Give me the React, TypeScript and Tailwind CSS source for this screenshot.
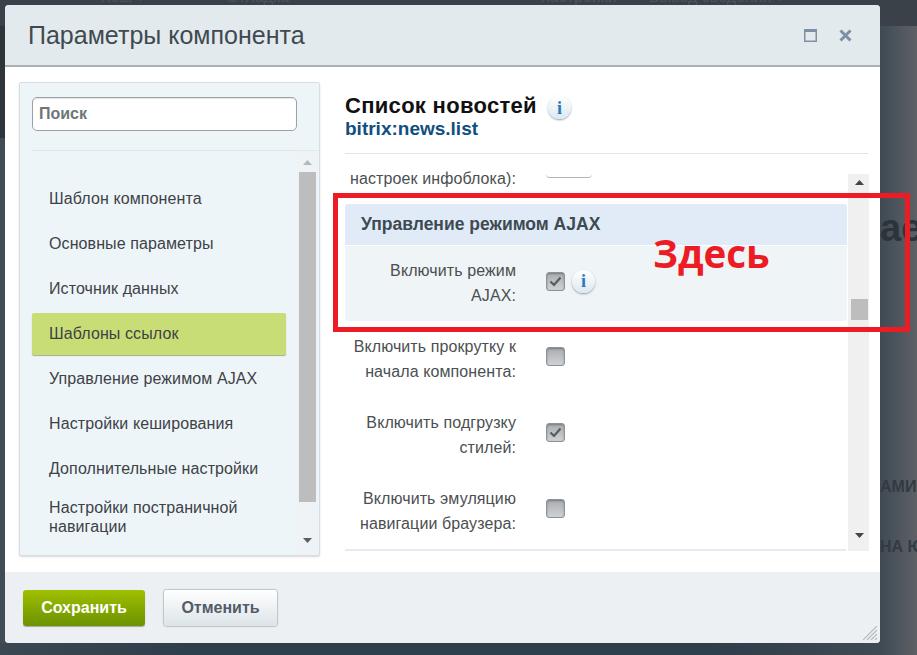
const sans = "font-['Liberation_Sans',Arial,sans-serif]";

const menu = [
  "Шаблон компонента",
  "Основные параметры",
  "Источник данных",
  "Шаблоны ссылок",
  "Управление режимом AJAX",
  "Настройки кеширования",
  "Дополнительные настройки",
];

function InfoIcon() {
  return (
    <span className="flex h-[23px] w-[23px] items-center justify-center rounded-full bg-gradient-to-b from-[#ffffff] to-[#dde8f0] shadow-[0_1px_2px_rgba(70,90,110,0.55)]">
      <span className="font-['Liberation_Serif',serif] text-[18px] leading-none font-bold text-[#2b78b8]">i</span>
    </span>
  );
}

function Checkbox({ checked }: { checked?: boolean }) {
  return (
    <span className="flex h-[19px] w-[19px] items-center justify-center rounded-[3px] border border-[#8d9297] bg-gradient-to-b from-[#a9adb1] to-[#cfd2d5] shadow-[inset_0_1px_2px_rgba(60,60,60,0.45)]">
      {checked && (
        <svg width="13" height="11" viewBox="0 0 13 11">
          <path d="M1.5 5.5 L5 9 L11.5 1.5" fill="none" stroke="#555b60" strokeWidth="2.2" />
        </svg>
      )}
    </span>
  );
}

function Arrow({ up, color }: { up?: boolean; color: string }) {
  return (
    <svg width="9" height="5" viewBox="0 0 9 5">
      <path d={up ? "M4.5 0 L9 5 L0 5 Z" : "M0 0 L9 0 L4.5 5 Z"} fill={color} />
    </svg>
  );
}

function ParamRow({ label, checked, info, className, boxClass }: { label: string[]; checked?: boolean; info?: boolean; className?: string; boxClass?: string }) {
  return (
    <div className={`flex items-center ${className ?? "h-[76px]"}`}>
      <div className="w-[171px] text-right text-[16px] leading-[25px] tracking-[0.1px] text-[#4b4f52]">
        {label.map((l) => (
          <div key={l}>{l}</div>
        ))}
      </div>
      <div className={`ml-[30px] flex items-center gap-[7px] ${boxClass ?? "mb-[6px]"}`}>
        <Checkbox checked={checked} />
        {info && <InfoIcon />}
      </div>
    </div>
  );
}

export default function App() {
  return (
    <div className={`relative h-[655px] w-[917px] overflow-hidden bg-[linear-gradient(90deg,#3b4852_0%,#2f3e4b_20%,#2f3e4b_78%,#3f4a53_96%,#5d6165_100%)] ${sans}`}>
      {/* page behind the dialog */}
      <div className="absolute inset-x-0 top-0 h-[26px] bg-[#3a4149]" />
      <div className="absolute top-[26px] left-0 h-[112px] w-[5px] bg-[#2e353b]" />
      <div className="absolute top-[138px] left-0 h-[505px] w-[5px] bg-[#414d55]" />
      <div className="absolute top-[26px] right-0 h-[617px] w-[37px] bg-[linear-gradient(90deg,#3f4a53,#5d6165)]" />
      <div className="absolute top-[-12px] left-[101px] text-[16px] leading-[18px] whitespace-nowrap text-[#4c545c]">Кеш ▾</div>
      <div className="absolute top-[-12px] left-[226px] text-[16px] leading-[18px] whitespace-nowrap text-[#4c545c]">Отладка</div>
      <div className="absolute top-[-12px] left-[541px] text-[16px] leading-[18px] whitespace-nowrap text-[#4c545c]">настройки</div>
      <div className="absolute top-[-12px] left-[649px] text-[16px] leading-[18px] whitespace-nowrap text-[#4c545c]">Вывод сведения ▾</div>
      <div className="absolute top-[205px] left-[880px] text-[38px] leading-[46px] font-bold whitespace-nowrap text-[#2c333b]">ае</div>
      <div className="absolute top-[478px] left-[880px] text-[16px] leading-[18px] font-bold whitespace-nowrap text-[#333a42]">АМИ</div>
      <div className="absolute top-[538px] left-[880px] text-[16px] leading-[18px] font-bold whitespace-nowrap text-[#333a42]">НА Ю</div>

      {/* dialog */}
      <div className="absolute top-[5px] left-[5px] flex h-[638px] w-[875px] flex-col overflow-hidden rounded-[4px] bg-white">
        <div className="flex h-[62px] shrink-0 items-center justify-between border-b-2 border-[#a9afb3] bg-[#e2eaee] pr-[28px] pl-[23px]">
          <span className="text-[25px] leading-none text-[#3f4a50]">Параметры компонента</span>
          <div className="flex items-center gap-[22px]">
            <svg width="13" height="13" viewBox="0 0 13 13">
              <path d="M0 0 H13 V13 H0 Z M1.5 3 V11.5 H11.5 V3 Z" fill="#7f8fa5" fillRule="evenodd" />
            </svg>
            <svg width="13" height="13" viewBox="0 0 13 13">
              <path d="M1.5 1.5 L11.5 11.5 M11.5 1.5 L1.5 11.5" stroke="#7f8fa5" strokeWidth="3" />
            </svg>
          </div>
        </div>

        <div className="flex flex-1 items-start pt-[15px] pl-[14px]">
          {/* left panel */}
          <div className="flex h-[474px] w-[301px] shrink-0 flex-col rounded-[2px] border border-[#d6dee3] bg-[#eef5f9] shadow-[0_1px_2px_rgba(0,0,0,0.15)]">
            <div className="mx-[12px] mt-[14px] flex h-[34px] w-[265px] items-center rounded-[5px] border border-[#9aa2a6] bg-white pl-[6px] text-[16px] font-bold text-[#6f7578] shadow-[inset_0_1px_1px_rgba(0,0,0,0.1)]">
              Поиск
            </div>
            <div className="mt-[19px] ml-[12px] flex flex-1 border-t border-[#e0e8ed]">
              <div className="flex w-[254px] flex-col gap-[3px] pt-[27px]">
                {menu.map((m, i) => (
                  <div
                    key={m}
                    className={`flex h-[42px] items-center rounded-[2px] pl-[17px] text-[16px] tracking-[0.1px] text-[#3d4246] ${i === 3 ? "bg-[#c9dd76] shadow-[0_1px_1px_rgba(90,110,20,0.5)]" : ""}`}
                  >
                    {m}
                  </div>
                ))}
                <div className="pt-[5px] pl-[17px] text-[16px] leading-[19px] tracking-[0.1px] text-[#3d4246]">
                  <div>Настройки постраничной</div>
                  <div>навигации</div>
                </div>
              </div>
              <div className="ml-[11px] flex w-[21px] flex-col items-center bg-[#f0f3f5] pt-[9px]">
                <Arrow up color="#b4b9bc" />
                <div className="mt-[7px] h-[330px] w-[17px] bg-[#bdbdbd]" />
                <div className="mt-[36px]">
                  <Arrow color="#5c5f62" />
                </div>
              </div>
            </div>
          </div>

          {/* right panel */}
          <div className="ml-[25px] flex w-[524px] shrink-0 flex-col">
            <div className="h-[72px] w-[523px] border-b border-[#e2e4e6] pt-[9px]">
              <div className="flex items-center">
                <span className="text-[22px] leading-[27px] font-bold tracking-[0.3px] text-[#111]">Список новостей</span>
                <span className="mt-[5px] ml-[11px]">
                  <InfoIcon />
                </span>
              </div>
              <div className="text-[19px] leading-[20px] font-bold text-[#114f80]">bitrix:news.list</div>
            </div>
            <div className="flex h-[397px]">
              <div className="w-[502px]">
                <div className="flex h-[50px]">
                  <div className="h-[36px] w-[171px] overflow-hidden pt-[12px] text-right text-[16px] leading-[25px] tracking-[0.1px] text-[#4b4f52]">настроек инфоблока):</div>
                  <div className="mt-[20px] ml-[30px] h-[4px] w-[46px] rounded-b-[4px] border-b border-[#aeb6bc] bg-white" />
                </div>
                <div className="flex h-[41px] items-center rounded-t-[3px] bg-[#e0ebf7] pl-[16px] text-[17.5px] font-bold text-[#3e4a52]">
                  Управление режимом AJAX
                </div>
                <ParamRow label={["Включить режим", "AJAX:"]} checked info className="mt-[1px] h-[75px] rounded-b-[3px] bg-[#eff4f6] pb-[2px]" boxClass="mb-[3px]" />
                <ParamRow label={["Включить прокрутку к", "начала компонента:"]} />
                <ParamRow label={["Включить подгрузку", "стилей:"]} checked />
                <ParamRow label={["Включить эмуляцию", "навигации браузера:"]} />
                <div className="h-[2px] w-[501px] bg-[#e4ebf2]" />
              </div>
              <div className="mt-[20px] ml-[1px] flex w-[21px] flex-col items-center bg-[#f0f0f0] pt-[6px] pl-[1px]">
                <Arrow up color="#444" />
                <div className="mt-[114px] h-[21px] w-[17px] bg-[#bdbdbd]" />
                <div className="mt-[213px]">
                  <Arrow color="#444" />
                </div>
              </div>
            </div>
          </div>
        </div>

        <div className="relative flex h-[71px] shrink-0 items-start gap-[19px] bg-[#ecf0f3] pt-[18px] pl-[18px]">
          <div className="flex h-[36px] w-[122px] items-center justify-center rounded-[3px] bg-gradient-to-b from-[#a0c000] to-[#6c9200] text-[16px] font-bold text-white shadow-[0_1px_1px_rgba(0,0,0,0.3)]">
            Сохранить
          </div>
          <div className="flex h-[36px] w-[113px] items-center justify-center rounded-[3px] bg-gradient-to-b from-[#ffffff] to-[#dce4e8] text-[16px] font-bold text-[#535c69] shadow-[0_0_1px_1px_rgba(120,130,140,0.4)]">
            Отменить
          </div>
          <svg className="absolute right-[3px] bottom-[3px]" width="14" height="14" viewBox="0 0 14 14">
            <path d="M0 14 L14 0 M4 14 L14 4 M8 14 L14 8 M12 14 L14 12" stroke="#b5b9bc" strokeWidth="1.2" />
          </svg>
        </div>
      </div>

      {/* red annotation */}
      <div className="absolute top-[193px] left-[333px] h-[139px] w-[577px] border-[5px] border-[#ed1c24]" />
      <div className="absolute top-[228px] left-[653px] font-['Open_Sans',sans-serif] text-[38.5px] leading-[50px] font-bold text-[#ed1c24]">Здесь</div>
    </div>
  );
}
